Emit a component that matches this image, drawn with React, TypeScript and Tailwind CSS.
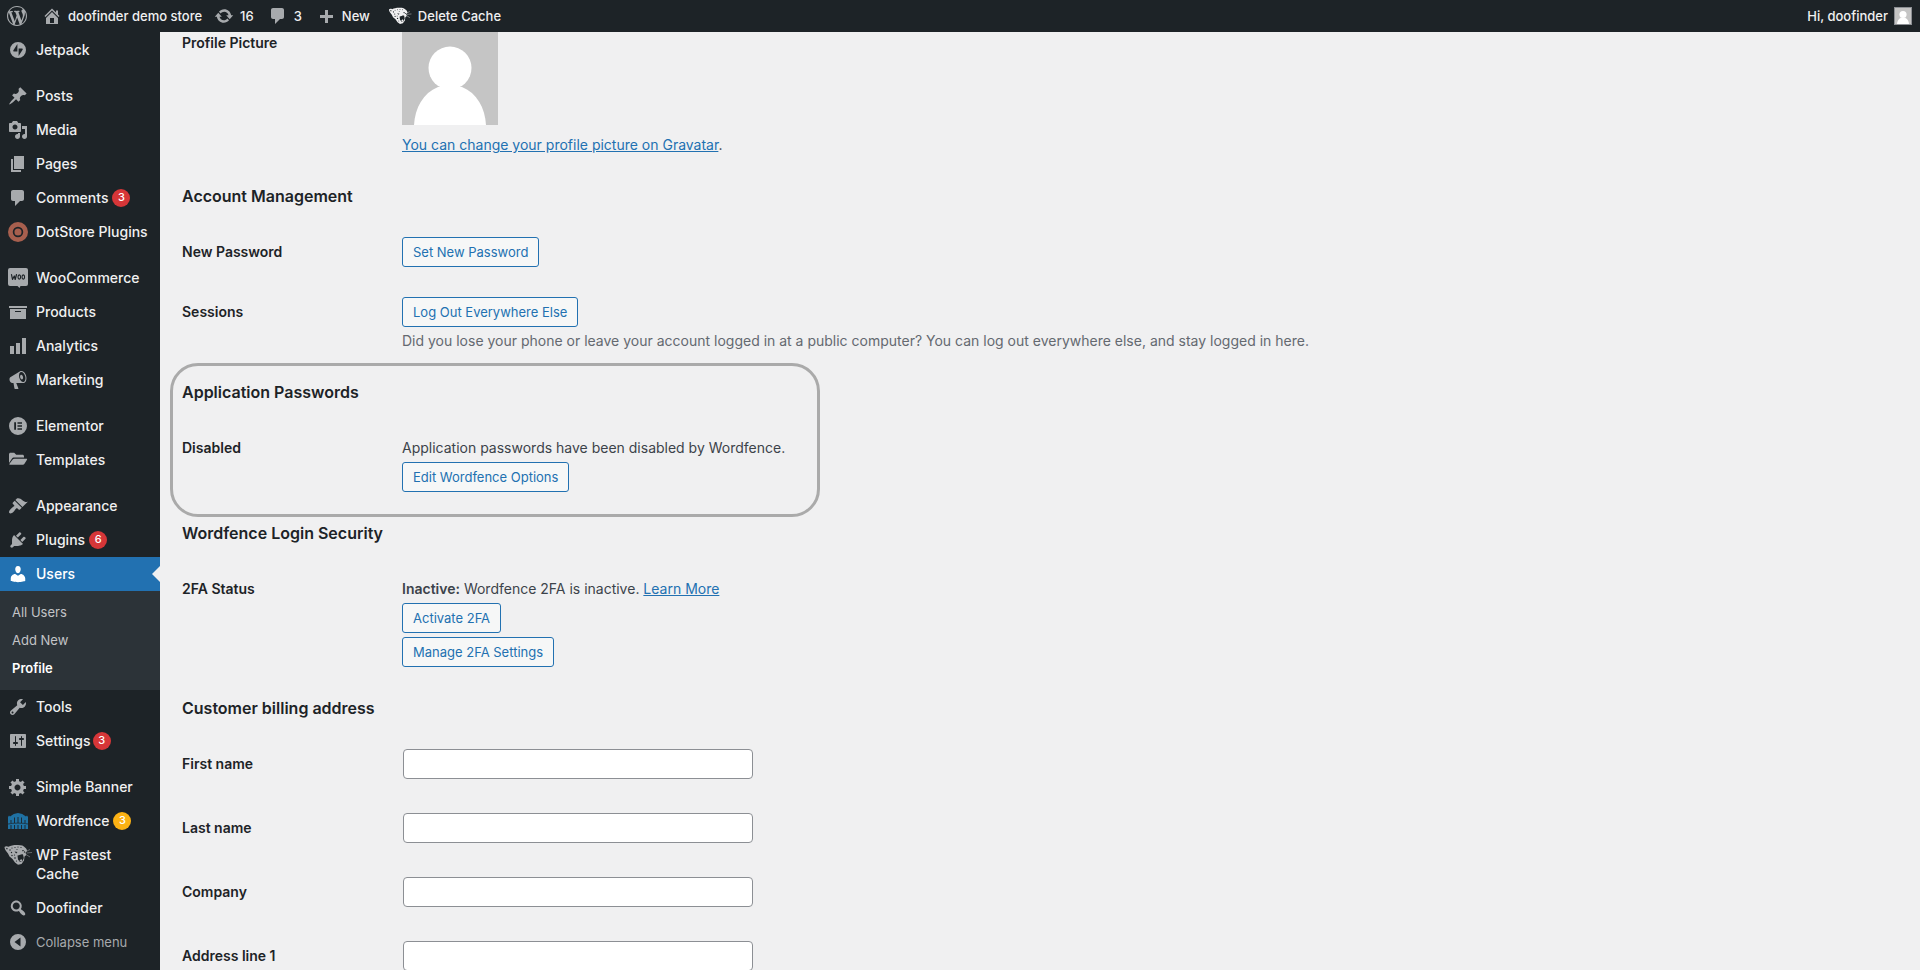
import { useId, type ReactNode } from "react";

const paths = {
  wordpress:
    "M20 10c0-5.51-4.49-10-10-10C4.48 0 0 4.49 0 10c0 5.52 4.48 10 10 10 5.51 0 10-4.48 10-10zM7.78 15.37L4.37 6.22c.55-.02 1.17-.08 1.17-.08.5-.06.44-1.13-.06-1.11 0 0-1.45.11-2.37.11-.18 0-.37 0-.58-.01C4.12 2.69 6.87 1.11 10 1.11c2.33 0 4.45.87 6.05 2.34-.68-.11-1.65.39-1.65 1.58 0 .74.45 1.36.9 2.1.35.61.55 1.36.55 2.46 0 1.49-1.4 5-1.4 5l-3.03-8.37c.54-.02.82-.17.82-.17.5-.05.44-1.25-.06-1.22 0 0-1.44.12-2.38.12-.87 0-2.33-.12-2.33-.12-.5-.03-.56 1.2-.06 1.22l.92.08 1.26 3.41zM17.41 10c.24-.64.74-1.87.43-4.25.7 1.29 1.05 2.71 1.05 4.25 0 3.29-1.73 6.24-4.4 7.78.97-2.59 1.94-5.2 2.92-7.78zM6.1 18.09C3.12 16.65 1.11 13.53 1.11 10c0-1.3.23-2.48.72-3.59C3.25 10.3 4.67 14.2 6.1 18.09zm4.03-6.63l2.58 6.98c-.86.29-1.76.45-2.71.45-.79 0-1.57-.11-2.29-.33.81-2.38 1.62-4.74 2.42-7.1z",
  home: "M16 8.5l1.53 1.53-1.06 1.06L10 4.6l-6.47 6.49-1.06-1.06L10 2.5l4 4v-2h2v4zm-6-2.46l6 5.99V18H4v-5.97zM12 17v-5H8v5h4z",
  update:
    "M10.2 3.28c3.53 0 6.43 2.61 6.92 6h2.08l-3.5 4-3.5-4h2.32c-.45-1.97-2.21-3.45-4.32-3.45-1.45 0-2.73.71-3.54 1.78L4.95 5.66C6.23 4.2 8.11 3.28 10.2 3.28zm-.4 13.44c-3.52 0-6.43-2.61-6.92-6H.8l3.5-4c1.17 1.33 2.33 2.67 3.5 4H5.48c.45 1.97 2.21 3.45 4.32 3.45 1.45 0 2.73-.71 3.54-1.78l1.71 1.95c-1.28 1.46-3.15 2.38-5.25 2.38z",
  comments: "M5 2h9c1.1 0 2 .9 2 2v7c0 1.1-.9 2-2 2h-2l-5 5v-5H5c-1.1 0-2-.9-2-2V4c0-1.1.9-2 2-2z",
  plus: "M17 9v3h-5v5H9v-5H4V9h5V4h3v5z",
  jetpack: "M10 2a8 8 0 1 0 0 16 8 8 0 0 0 0-16zM9.4 11.6H6.2c-.8 0-1.2-.7-.8-1.4l4-6.2zm1.2 4.5V8.4h3.2c.8 0 1.2.7.8 1.4z",
  posts:
    "M10.44 3.02l1.82-1.82 6.36 6.35-1.83 1.82c-1.05-.68-2.48-.57-3.41.36l-.75.75c-.92.93-1.04 2.35-.35 3.41l-1.83 1.82-2.41-2.41-2.8 2.79c-.42.42-3.38 2.71-3.8 2.29s1.86-3.39 2.28-3.81l2.79-2.79L4.1 9.36l1.83-1.82c1.05.69 2.48.57 3.4-.36l.75-.75c.93-.92 1.05-2.35.36-3.41z",
  media:
    "M13 11V4c0-.55-.45-1-1-1h-1.67L9 1H5L3.67 3H2c-.55 0-1 .45-1 1v7c0 .55.45 1 1 1h10c.55 0 1-.45 1-1zM7 4.5c1.38 0 2.5 1.12 2.5 2.5S8.38 9.5 7 9.5 4.5 8.38 4.5 7 5.62 4.5 7 4.5zM14 6h5v10.5c0 1.38-1.12 2.5-2.5 2.5S14 17.88 14 16.5s1.12-2.5 2.5-2.5c.17 0 .34.02.5.05V9h-3V6zm-4 8.05V13h2v3.5c0 1.38-1.12 2.5-2.5 2.5S7 17.88 7 16.5 8.12 14 9.5 14c.17 0 .34.02.5.05z",
  pages: "M6 15V2h10v13H6zm-1 1h8v2H3V5h2v11z",
  archive: "M19 4v2H1V4h18zM2 7h16v10H2V7zm11 3V9H7v1h6z",
  chart: "M18 18V2h-4v16h4zm-6 0V7H8v11h4zm-6 0v-8H2v8h4z",
  megaphone:
    "M18.15 5.94c.46 1.62.38 3.22-.02 4.48-.42 1.28-1.26 2.18-2.3 2.48-.16.06-.26.06-.4.06-.06.02-.12.02-.18.02-.06.02-.14.02-.22.02h-6.8l2.22 5.5c.02.14-.06.26-.14.34-.08.1-.24.16-.34.16H6.95c-.1 0-.26-.06-.34-.16-.08-.08-.16-.2-.14-.34l-1-5.5H4.25l-.02-.02c-.5.06-1.08-.18-1.54-.62s-.88-1.08-1.06-1.88c-.24-.8-.2-1.56-.02-2.2.18-.62.58-1.08 1.06-1.3l.02-.02 9-5.4c.1-.06.18-.1.24-.16.06-.04.14-.08.24-.12.16-.08.28-.12.5-.18 1.04-.3 2.24.1 3.22.98s1.84 2.24 2.26 3.86zm-2.58 5.98h-.02c.4-.1.74-.34 1.04-.7.58-.7.86-1.76.86-3.04 0-.64-.1-1.3-.28-1.98-.34-1.36-1.02-2.5-1.78-3.24s-1.68-1.1-2.46-.88c-.82.22-1.4.96-1.7 2-.32 1.04-.28 2.36.06 3.72.38 1.36 1 2.5 1.8 3.24.78.74 1.62 1.1 2.48.88zm-2.54-7.08c.22-.04.42-.02.62.04.38.16.76.48 1.02 1s.42 1.2.42 1.78c0 .3-.04.56-.12.8-.18.48-.44.84-.86.94-.34.1-.8-.06-1.14-.4s-.64-.86-.78-1.5c-.18-.62-.12-1.24.02-1.72s.48-.84.82-.94z",
  elementor: "M10 1a9 9 0 1 0 0 18 9 9 0 0 0 0-18zM6.2 6.2h1.8v7.6H6.2zm3.3 0h4.5v1.6H9.5zm0 3h4.5v1.6H9.5zm0 3h4.5v1.6H9.5z",
  folder:
    "M1 4.2C1 3.400 1.700 2.700 2.500 2.700h3.700l2 2h6.300c.8 0 1.500.7 1.500 1.500V7.500H6.300c-1.100 0-2 .5-2.600 1.400L1 13zM6.500 8.700h12c.5 0 .8.5.5 1l-2.700 4.300c-.3.500-.8.800-1.400.800H2c-.5 0-.8-.5-.5-1l3-4.100c.5-.6 1.200-1 2-1z",
  appearance:
    "M14.48 11.06L7.41 3.99l1.5-1.5c.5-.56 2.3-.47 3.51.32 1.21.8 1.43 1.28 2.91 2.1 1.18.64 2.45 1.26 4.45.85zm-.71.71L6.7 4.7 4.93 6.47c-.39.39-.39 1.02 0 1.41l1.06 1.06c.39.39.39 1.03 0 1.42-.6.6-1.43 1.11-2.21 1.69-.35.26-.7.53-1.01.84C1.43 14.23.4 16.08 1.4 17.07c.99 1 2.84-.03 4.18-1.36.31-.31.58-.66.85-1.02.57-.78 1.08-1.61 1.69-2.21.39-.39 1.02-.39 1.41 0l1.06 1.06c.39.39 1.02.39 1.41 0z",
  plugins:
    "M13.11 4.36L9.87 7.6 8 5.73l3.24-3.24c.35-.34 1.05-.2 1.56.32.52.51.66 1.21.31 1.55zm-8 1.77l.91-1.12 9.01 9.01-1.19.84c-.71.71-2.63 1.16-3.82 1.16H6.14L4.9 17.26c-.59.59-1.54.59-2.12 0-.59-.58-.59-1.53 0-2.12l1.24-1.24v-3.88c0-1.13.4-3.19 1.09-3.89zm7.26 3.97l3.24-3.24c.34-.35 1.04-.21 1.55.31.52.51.66 1.21.31 1.55l-3.24 3.25z",
  users:
    "M10 9.25c-2.27 0-2.73-3.44-2.73-3.44C7 4.02 7.82 2 9.97 2c2.16 0 2.98 2.02 2.71 3.81 0 0-.41 3.44-2.68 3.44zm0 2.57L12.72 10c2.39 0 4.52 2.33 4.52 4.53v2.49s-3.65 1.13-7.24 1.13c-3.65 0-7.24-1.13-7.24-1.13v-2.49c0-2.25 1.94-4.48 4.47-4.48z",
  tools:
    "M16.68 9.77c-1.34 1.34-3.3 1.67-4.95.99l-5.41 6.52c-.99.99-2.59.99-3.58 0s-.99-2.59 0-3.57l6.52-5.42c-.68-1.65-.35-3.61.99-4.95 1.28-1.28 3.12-1.62 4.72-1.06l-2.89 2.89 2.82 2.82 2.86-2.87c.53 1.58.18 3.39-1.08 4.65zM3.81 16.21c.4.39 1.04.39 1.43 0 .4-.4.4-1.04 0-1.43-.39-.4-1.03-.4-1.43 0-.39.39-.39 1.03 0 1.43z",
  settings:
    "M18 16V4c0-.55-.45-1-1-1H3c-.55 0-1 .45-1 1v12c0 .55.45 1 1 1h14c.55 0 1-.45 1-1zM8 11h1c.55 0 1 .45 1 1s-.45 1-1 1H8v1.5c0 .28-.22.5-.5.5s-.5-.22-.5-.5V13H6c-.55 0-1-.45-1-1s.45-1 1-1h1V5.5c0-.28.22-.5.5-.5s.5.22.5.5V11zm5-2h-1c-.55 0-1-.45-1-1s.45-1 1-1h1V5.5c0-.28.22-.5.5-.5s.5.22.5.5V7h1c.55 0 1 .45 1 1s-.45 1-1 1h-1v5.5c0 .28-.22.5-.5.5s-.5-.22-.5-.5V9z",
  gear: "M18 12h-2.18c-.17.7-.44 1.35-.81 1.93l1.54 1.54-2.1 2.1-1.54-1.54c-.58.36-1.23.63-1.91.79V19H8v-2.18c-.68-.16-1.33-.43-1.91-.79l-1.54 1.54-2.12-2.12 1.54-1.54c-.36-.58-.63-1.23-.79-1.91H1V9.03h2.17c.16-.7.44-1.35.8-1.94L2.43 5.55l2.1-2.1 1.54 1.54c.58-.37 1.24-.64 1.93-.81V2h3v2.18c.68.16 1.33.43 1.91.79l1.54-1.54 2.12 2.12-1.54 1.54c.36.59.64 1.24.8 1.94H18V12zm-8.5 1.5c1.66 0 3-1.34 3-3s-1.34-3-3-3-3 1.34-3 3 1.34 3 3 3z",
  search:
    "M12.14 4.18c1.87 1.87 2.11 4.75.72 6.89.12.1.22.21.36.31.2.16.47.36.81.59.34.24.56.39.66.47.42.31.73.57.94.78.32.32.6.65.84 1 .25.35.44.69.59 1.04.14.35.21.68.18 1-.02.32-.14.59-.36.81s-.49.34-.81.36c-.31.02-.65-.04-.99-.19-.35-.14-.7-.34-1.04-.59-.35-.24-.68-.52-1-.84-.21-.21-.47-.52-.77-.93-.1-.13-.25-.35-.47-.66-.22-.32-.4-.57-.56-.78-.16-.2-.29-.35-.44-.5-2.07 1.09-4.69.76-6.44-.98-2.14-2.15-2.14-5.64 0-7.78 2.15-2.15 5.63-2.15 7.78 0zm-1.41 6.36c1.36-1.37 1.36-3.58 0-4.95-1.37-1.37-3.59-1.37-4.95 0-1.37 1.37-1.37 3.58 0 4.95 1.36 1.37 3.58 1.37 4.95 0z",
  collapse: "M10 2a8 8 0 1 0 0 16 8 8 0 0 0 0-16zM12.5 5.5v9L6.5 10z",
};

function Icon({ name }: { name: keyof typeof paths }) {
  return (
    <svg viewBox="0 0 20 20" className="size-5 shrink-0" fill="currentColor" fillRule="evenodd" aria-hidden="true">
      <path d={paths[name]} />
    </svg>
  );
}

function DotStoreIcon() {
  return (
    <svg viewBox="0 0 20 20" className="size-5 shrink-0" aria-hidden="true">
      <circle cx="10" cy="10" r="10" fill="#a75f4e" />
      <circle cx="10" cy="10" r="4.4" fill="#a75f4e" stroke="#1d2327" strokeWidth="1.7" />
    </svg>
  );
}

function WooIcon() {
  return (
    <svg viewBox="0 0 20 20" className="size-5 shrink-0" aria-hidden="true">
      <path d="M2 0h16a2 2 0 0 1 2 2v14a2 2 0 0 1-2 2h-5.5l-1 2-2-2H2a2 2 0 0 1-2-2V2a2 2 0 0 1 2-2z" fill="#a7aaad" />
      <path
        d="M3.5 6.5l1 5 1.8-3.5.9 3.5 1.3-5"
        fill="none"
        stroke="#1d2327"
        strokeWidth="1.2"
        strokeLinejoin="round"
        strokeLinecap="round"
      />
      <ellipse cx="11.3" cy="9" rx="1.3" ry="2.1" fill="none" stroke="#1d2327" strokeWidth="1.1" />
      <ellipse cx="15.3" cy="9" rx="1.3" ry="2.1" fill="none" stroke="#1d2327" strokeWidth="1.1" />
    </svg>
  );
}

function WordfenceIcon() {
  return (
    <svg viewBox="0 0 20 16" className="h-4 w-5 shrink-0" aria-hidden="true">
      <path d="M0 16V4l1-1.5L2 3.500C4.500 1.500 7 .3 10 0c3 .3 5.500 1.500 8 3.500l1-1L20 4v12z" fill="#1f71a3" />
      <path
        d="M3 7v3M3 12v4M6.500 4.500V10M6.500 12v4M10 4v6M10 12v4M13.500 4.500V10M13.500 12v4M17 7v3M17 12v4"
        stroke="#1d2327"
        strokeWidth=".9"
        fill="none"
      />
      <path d="M0 11c6-1.200 14-1.200 20 0" stroke="#1d2327" strokeWidth=".7" fill="none" />
    </svg>
  );
}

function CheetahIcon({ light = false }: { light?: boolean }) {
  return (
    <svg
      viewBox="0 0 28 22"
      className={light ? "h-[18px] w-6 shrink-0 text-[#f0f0f1]" : "h-[22px] w-7 shrink-0 text-[#a7aaad]"}
      aria-hidden="true"
    >
      <path
        d="M.5 3c1-1 2.500-1 4-.2C7 1.500 10 .8 14 1c3.500 0 5.800.8 7 2.500 1.200.8 2 2 2 3.500l-1.500 1.500.8 2.500-1.800 1.500-.5 4-2.500 3.500-3.500.8-3-2.300-2.500-3.500-3-2.500-1.500-3C2.500 7.500.5 5.500.5 3z"
        fill="currentColor"
      />
      <path
        d="M13.500 11.500c2.500-.5 4-1.800 5.500-1l.8 3.500-1.500 3.500-2.300.5-2-2.500z"
        fill="#1d2327"
      />
      <path d="M15.500 16.500l1.800-1.500 1 1.500-1 1.500z" fill="currentColor" />
      <g fill="#1d2327">
        <path d="M1.800 3.800l2 .4-.8 1.600zM10.500 7.500l3 .6-1.300 1.300zM18 6l2.300.3-1.500 1.200z" />
        <circle cx="6" cy="6" r=".7" />
        <circle cx="8" cy="4" r=".6" />
        <circle cx="11" cy="3.500" r=".6" />
        <circle cx="14" cy="3" r=".6" />
        <circle cx="17" cy="3.500" r=".6" />
        <circle cx="13" cy="5.500" r=".5" />
        <circle cx="7.500" cy="8.500" r=".7" />
        <circle cx="8" cy="11.500" r=".7" />
        <circle cx="10.500" cy="11" r=".6" />
        <circle cx="11" cy="14" r=".8" />
        <circle cx="12.500" cy="17" r=".6" />
        <circle cx="20.500" cy="8" r=".7" />
      </g>
      <path
        d="M22 7.500l4-2M22.500 9l5.500-.5M22 10.500l4 2.500"
        stroke="currentColor"
        strokeOpacity=".65"
        strokeWidth=".8"
        fill="none"
      />
    </svg>
  );
}

function Avatar({ className }: { className: string }) {
  return (
    <svg viewBox="0 0 96 96" preserveAspectRatio="xMidYMax slice" className={className} role="img" aria-label="Avatar">
      <rect width="96" height="96" fill="#c5c5c5" />
      <circle cx="48" cy="39" r="21.5" fill="#fff" />
      <path d="M12 96c1-17 9-32 24-38h24c15 6 23 21 24 38z" fill="#fff" />
    </svg>
  );
}

type Item = { label: string; icon: ReactNode; badge?: string; amber?: boolean; gap?: boolean; tight?: boolean };

const menuTop: Item[] = [
  { label: "Jetpack", icon: <Icon name="jetpack" /> },
  { label: "Posts", icon: <Icon name="posts" />, gap: true },
  { label: "Media", icon: <Icon name="media" /> },
  { label: "Pages", icon: <Icon name="pages" /> },
  { label: "Comments", icon: <Icon name="comments" />, badge: "3" },
  { label: "DotStore Plugins", icon: <DotStoreIcon /> },
  { label: "WooCommerce", icon: <WooIcon />, gap: true },
  { label: "Products", icon: <Icon name="archive" /> },
  { label: "Analytics", icon: <Icon name="chart" /> },
  { label: "Marketing", icon: <Icon name="megaphone" /> },
  { label: "Elementor", icon: <Icon name="elementor" />, gap: true },
  { label: "Templates", icon: <Icon name="folder" /> },
  { label: "Appearance", icon: <Icon name="appearance" />, gap: true },
  { label: "Plugins", icon: <Icon name="plugins" />, badge: "6" },
];

const menuBottom: Item[] = [
  { label: "Tools", icon: <Icon name="tools" /> },
  { label: "Settings", icon: <Icon name="settings" />, badge: "3", tight: true },
  { label: "Simple Banner", icon: <Icon name="gear" />, gap: true },
  { label: "Wordfence", icon: <WordfenceIcon />, badge: "3", amber: true },
  { label: "WP Fastest Cache", icon: <CheetahIcon /> },
  { label: "Doofinder", icon: <Icon name="search" /> },
];

function MenuItem({ item }: { item: Item }) {
  return (
    <li className={item.gap ? "mt-3" : ""}>
      <a href="#" className="flex pr-2 text-[#f0f0f1]">
        <span className="flex h-[34px] w-9 shrink-0 items-center justify-center text-[#a7aaad]">{item.icon}</span>
        <span className="pt-[7px] pb-2 leading-[19px]">{item.label}</span>
        {item.badge && (
          <span
            className={`mt-2 flex size-[18px] items-center justify-center rounded-full text-[11px] text-white ${
              item.amber ? "bg-[#fcb214]" : "bg-[#d63638]"
            } ${item.tight ? "ml-0.5" : "ml-1"}`}
          >
            {item.badge}
          </span>
        )}
      </a>
    </li>
  );
}

function Sidebar() {
  return (
    <nav aria-label="Main menu" className="w-40 shrink-0 bg-[#1d2327] pt-px text-sm font-medium">
      <ul>
        {menuTop.map((item) => (
          <MenuItem key={item.label} item={item} />
        ))}
        <li>
          <a href="#" className="flex h-[34px] items-center bg-[#2271b1] text-white">
            <span className="flex w-9 justify-center">
              <Icon name="users" />
            </span>
            <span className="flex-1">Users</span>
            <span className="border-y-8 border-r-8 border-y-transparent border-r-[#f0f0f1]" />
          </a>
          <ul className="bg-[#2c3338] pt-[7px] pb-2 text-[13px] font-normal text-[#c3c4c7]">
            <li className="flex h-7 items-center px-3">
              <a href="#">All Users</a>
            </li>
            <li className="flex h-7 items-center px-3">
              <a href="#">Add New</a>
            </li>
            <li className="flex h-7 items-center px-3">
              <a href="#" className="font-semibold text-white">
                Profile
              </a>
            </li>
          </ul>
        </li>
        {menuBottom.map((item) => (
          <MenuItem key={item.label} item={item} />
        ))}
      </ul>
      <button type="button" className="flex h-[34px] items-center text-[13px] font-normal text-[#a7aaad]">
        <span className="flex w-9 justify-center">
          <Icon name="collapse" />
        </span>
        Collapse menu
      </button>
    </nav>
  );
}

function AdminBar() {
  return (
    <header className="flex h-8 shrink-0 items-center bg-[#1d2327] pr-2 pl-[7px] text-[13px] font-medium text-[#f0f0f1]">
      <a href="#" aria-label="WordPress" className="mr-[15px] text-[#a7aaad]">
        <Icon name="wordpress" />
      </a>
      <a href="#" className="mr-3 flex items-center gap-1.5">
        <span className="text-[#a7aaad]">
          <Icon name="home" />
        </span>
        doofinder demo store
      </a>
      <a href="#" className="mr-3.5 flex items-center gap-1.5">
        <span className="text-[#a7aaad]">
          <Icon name="update" />
        </span>
        16
      </a>
      <a href="#" className="mr-3.5 flex items-center gap-1.5">
        <span className="text-[#a7aaad]">
          <Icon name="comments" />
        </span>
        3
      </a>
      <a href="#" className="mr-[18px] flex items-center gap-1.5">
        <span className="text-[#a7aaad]">
          <Icon name="plus" />
        </span>
        New
      </a>
      <a href="#" className="flex items-center gap-1.5">
        <CheetahIcon light />
        Delete Cache
      </a>
      <a href="#" className="ml-auto flex items-center gap-1.5">
        Hi, doofinder
        <Avatar className="size-[18px] border border-[#8c8f94]" />
      </a>
    </header>
  );
}

function Row({ label, children, htmlFor }: { label: string; children: ReactNode; htmlFor?: string }) {
  const style = "pt-[5px] leading-5 font-semibold text-[#1d2327]";
  return (
    <div className="grid grid-cols-[220px_1fr]">
      {htmlFor ? (
        <label htmlFor={htmlFor} className={style}>
          {label}
        </label>
      ) : (
        <h3 className={style}>{label}</h3>
      )}
      <div className="flex flex-col items-start gap-1">{children}</div>
    </div>
  );
}

function Field({ label }: { label: string }) {
  const id = useId();
  return (
    <Row label={label} htmlFor={id}>
      <input id={id} type="text" className="ml-px h-[30px] w-[350px] rounded border border-[#8c8f94] bg-white px-2" />
    </Row>
  );
}

function Action({ children }: { children: ReactNode }) {
  return (
    <button
      type="button"
      className="h-[30px] rounded-[3px] border border-[#2271b1] bg-[#f6f7f7] px-2.5 text-[13px] text-[#2271b1]"
    >
      {children}
    </button>
  );
}

function Heading({ children }: { children: ReactNode }) {
  return <h2 className="my-[29px] text-base leading-6 font-semibold text-[#1d2327]">{children}</h2>;
}

export default function App() {
  return (
    <div className="flex h-screen flex-col overflow-hidden bg-[#f0f0f1] font-['Inter',sans-serif] text-sm text-[#3c434a]">
      <AdminBar />
      <div className="flex min-h-0 flex-1">
        <Sidebar />
        <main className="min-w-0 flex-1 overflow-hidden pl-[22px]">
          <div className="grid grid-cols-[220px_1fr]">
            <h3 className="pt-px leading-5 font-semibold text-[#1d2327]">Profile Picture</h3>
            <div>
              <Avatar className="h-[93px] w-24" />
              <p className="mt-[10px] leading-5">
                <a href="#" className="text-[#2271b1] underline">
                  You can change your profile picture on Gravatar
                </a>
                .
              </p>
            </div>
          </div>

          <section>
            <Heading>Account Management</Heading>
            <div className="flex flex-col gap-[30px]">
              <Row label="New Password">
                <Action>Set New Password</Action>
              </Row>
              <Row label="Sessions">
                <Action>Log Out Everywhere Else</Action>
                <p className="leading-5 text-[#646970]">
                  Did you lose your phone or leave your account logged in at a public computer? You can log out
                  everywhere else, and stay logged in here.
                </p>
              </Row>
            </div>
          </section>

          <section className="relative">
            <div className="pointer-events-none absolute -top-[17px] -bottom-[25px] -left-3 w-[650px] rounded-[28px] border-[3px] border-[#aaaaaa]" />
            <Heading>Application Passwords</Heading>
            <Row label="Disabled">
              <p className="pt-[5px] leading-5">Application passwords have been disabled by Wordfence.</p>
              <Action>Edit Wordfence Options</Action>
            </Row>
          </section>

          <section>
            <Heading>Wordfence Login Security</Heading>
            <Row label="2FA Status">
              <p className="pt-[5px] leading-5">
                <strong className="font-semibold">Inactive:</strong> Wordfence 2FA is inactive.{" "}
                <a href="#" className="text-[#2271b1] underline">
                  Learn More
                </a>
              </p>
              <Action>Activate 2FA</Action>
              <Action>Manage 2FA Settings</Action>
            </Row>
          </section>

          <section>
            <Heading>Customer billing address</Heading>
            <div className="flex flex-col gap-[34px]">
              <Field label="First name" />
              <Field label="Last name" />
              <Field label="Company" />
              <Field label="Address line 1" />
            </div>
          </section>
        </main>
      </div>
    </div>
  );
}
